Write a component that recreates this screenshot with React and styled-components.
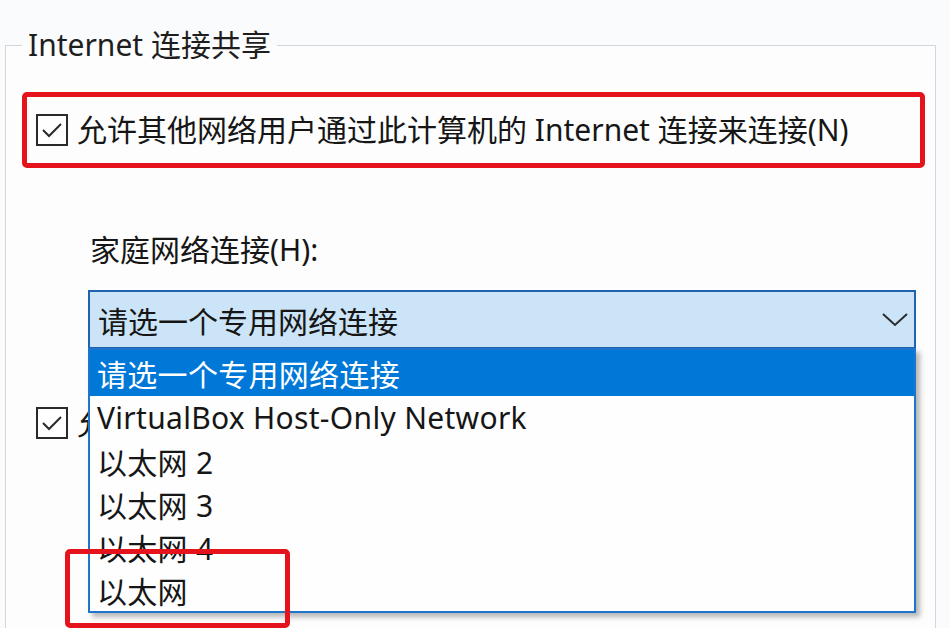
import React from 'react';
import styled, { createGlobalStyle } from 'styled-components';

const GlobalStyle = createGlobalStyle`
  html, body {
    margin: 0;
    padding: 0;
    background: #fafbfd;
  }
  body {
    font-family: "Noto Sans", "Noto Sans CJK SC", sans-serif;
    color: #161616;
  }
`;

// whole visible window area
const Page = styled.div`
  width: 950px;
  height: 628px;
  overflow: hidden;
  padding-left: 5px;
  box-sizing: border-box;
`;

// the Windows group box
const GroupBox = styled.fieldset`
  margin: 30px 0 0 0;
  width: 931px;
  height: 720px;
  box-sizing: border-box;
  border: 1px solid #d3d5d9;
  padding: 32px 0 0 16px;
  background: #fdfdfe;
`;

const Legend = styled.legend`
  font-size: 30px;
  line-height: 30px;
  padding: 0 6px;
  color: #1e1e1e;
`;

const HighlightRow = styled.div`
  display: flex;
  align-items: center;
  gap: 9px;
  width: 903px;
  height: 76px;
  box-sizing: border-box;
  padding-left: 9px;
  border: 5px solid #e5141c;
  border-radius: 5px;
`;

const CheckRow = styled.div`
  display: flex;
  align-items: center;
  gap: 9px;
  margin: ${p => p.$top || 0}px 0 0 14px;
  height: 34px;
`;

const Box = styled.span`
  width: 32px;
  height: 32px;
  box-sizing: border-box;
  border: 2px solid #2a2a2a;
  background: #fff;
  display: flex;
  align-items: center;
  justify-content: center;
  flex-shrink: 0;
`;

// $clip: the part hidden under the open list is cut away
const Text = styled.span`
  font-size: 30px;
  line-height: 34px;
  white-space: nowrap;
  ${p => p.$clip && `max-width: ${p.$clip}px; overflow: hidden;`}
`;

const FieldLabel = styled.div`
  margin: 67px 0 0 68px;
  font-size: 30px;
  line-height: 30px;
`;

const Combo = styled.div`
  position: relative;
  margin: 25px 0 0 66px;
  width: 828px;
  height: 59px;
  box-sizing: border-box;
  border: 2px solid #2263ae;
  background: #cce4f7;
  display: flex;
  align-items: center;
  justify-content: space-between;
  padding: 0 6px 0 8px;
  font-size: 30px;
`;

// opened list lies over the rest of the group
const DropList = styled.ul`
  position: absolute;
  top: 56px;
  left: -2px;
  width: 828px;
  margin: 0;
  padding: 0;
  list-style: none;
  box-sizing: border-box;
  border: 2px solid #1f74cc;
  background: #fefeff;
  box-shadow: 4px 4px 5px rgba(0, 0, 0, 0.28);
  z-index: 2;
`;

const Item = styled.li`
  position: relative;
  height: ${p => (p.$active ? 46 : 43)}px;
  display: flex;
  align-items: center;
  padding-left: 7px;
  font-size: 30px;
  letter-spacing: 0.3px;
  white-space: nowrap;
  background: ${p => (p.$active ? '#0078d7' : 'transparent')};
  color: ${p => (p.$active ? '#fff' : '#161616')};
`;

const MarkBox = styled.span`
  position: absolute;
  left: -25px;
  top: -19px;
  width: 225px;
  height: 79px;
  box-sizing: border-box;
  border: 5px solid #e5141c;
  border-radius: 5px;
`;

const Check = () => (
  <Box>
    <svg width="22" height="18" viewBox="0 0 22 18">
      <polyline points="2,9 8,15 20,3" fill="none" stroke="#2a2a2a" strokeWidth="2" />
    </svg>
  </Box>
);

const Chevron = () => (
  <svg width="26" height="14" viewBox="0 0 26 14">
    <polyline points="1,1 13,12 25,1" fill="none" stroke="#2b2b2b" strokeWidth="2" />
  </svg>
);

const options = [
  '请选一个专用网络连接',
  'VirtualBox Host-Only Network',
  '以太网 2',
  '以太网 3',
  '以太网 4',
  '以太网',
];

export default function App() {
  return (
    <>
      <GlobalStyle />
      <Page>
        <GroupBox>
          <Legend>Internet 连接共享</Legend>
          <HighlightRow>
            <Check />
            <Text>允许其他网络用户通过此计算机的 Internet 连接来连接(N)</Text>
          </HighlightRow>
          <FieldLabel>家庭网络连接(H):</FieldLabel>
          <Combo>
            <span>请选一个专用网络连接</span>
            <Chevron />
            <DropList>
              {options.map((o, i) => (
                <Item key={o} $active={i === 0}>
                  {o}
                  {i === options.length - 1 && <MarkBox />}
                </Item>
              ))}
            </DropList>
          </Combo>
          <CheckRow $top={57}>
            <Check />
            <Text $clip={12}>允许其他网络用户控制或禁用共享的 Internet 连接(O)</Text>
          </CheckRow>
        </GroupBox>
      </Page>
    </>
  );
}
